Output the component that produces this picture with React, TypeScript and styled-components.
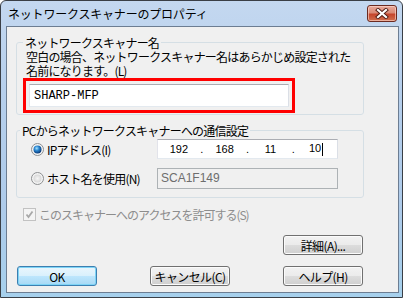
import styled, { createGlobalStyle, css } from "styled-components";

const GlobalStyle = createGlobalStyle`
  html, body {
    margin: 0;
    padding: 0;
    background: #ffffff;
  }
  body {
    font-family: "Noto Sans CJK JP", "Noto Sans", sans-serif;
    font-size: 12px;
    color: #000;
  }
  * {
    box-sizing: border-box;
  }
`;

const Window = styled.div`
  width: 403px;
  height: 298px;
  border: 1px solid #3a3f46;
  border-radius: 6px 6px 0 0;
  background: linear-gradient(#c4d8f0, #b6cfec 30%, #aecbea 70%, #a6d0ec);
  padding: 0 3px 4px 5px;
  display: flex;
  flex-direction: column;
  overflow: hidden;
`;

const TitleBar = styled.div`
  height: 25px;
  display: flex;
  align-items: center;
  justify-content: space-between;
  padding: 0 2px;
`;

const Title = styled.span`
  font-size: 12px;
  line-height: 14px;
  letter-spacing: -0.2px;
  color: #000;
`;

const CloseButton = styled.div`
  width: 30px;
  height: 17px;
  border: 1px solid #6b2a20;
  border-radius: 3px;
  background: linear-gradient(#e9a99a 0%, #d98a76 45%, #c5452c 55%, #d0704f 100%);
  box-shadow: inset 0 0 0 1px rgba(255, 220, 210, 0.6);
  display: flex;
  align-items: center;
  justify-content: center;
`;

const Client = styled.div`
  flex: 1;
  border: 1px solid #6c7d92;
  background: #f0f0f0;
  padding: 8px 0 0 9px;
`;

const Column = styled.div`
  width: 348px;
  display: flex;
  flex-direction: column;
`;

const Group = styled.fieldset<{ $top?: number; $pad: string }>`
  margin: ${(p) => p.$top ?? 0}px 0 0;
  padding: ${(p) => p.$pad};
  border: 1px solid #d5dfe5;
  border-radius: 3px;
  min-width: 0;
`;

const Legend = styled.legend<{ $indent: number }>`
  margin-left: ${(p) => p.$indent}px;
  padding: 0 2px;
  height: 15px;
  line-height: 15px;
  letter-spacing: -0.8px;
  white-space: nowrap;
`;

const Note = styled.p`
  margin: 0;
  line-height: 14px;
  letter-spacing: -0.8px;
  white-space: nowrap;
`;

const Highlight = styled.div`
  width: 272px;
  margin: 0 0 0 -3px;
  padding: 3px;
  border: 3px solid #ff0000;
`;

const NameInput = styled.div`
  height: 23px;
  background: #ffffff;
  border: 1px solid;
  border-color: #abadb3 #dbdfe6 #e3e9ef #e2e3ea;
  padding-left: 4px;
  display: flex;
  align-items: center;
  font-family: "Liberation Mono", monospace;
  font-size: 12px;
`;

const OptionRow = styled.div<{ $top?: number }>`
  height: 20px;
  margin-top: ${(p) => p.$top ?? 0}px;
  display: flex;
  align-items: center;
`;

const OptionLabel = styled.label`
  width: 126px;
  display: flex;
  align-items: center;
  gap: 3px;
  letter-spacing: -0.8px;
  white-space: nowrap;
`;

const Field = styled.div<{ $disabled?: boolean }>`
  width: 181px;
  height: ${(p) => (p.$disabled ? 21 : 20)}px;
  border: 1px solid;
  display: flex;
  align-items: center;
  ${(p) =>
    p.$disabled
      ? css`
          background: #f0f0f0;
          border-color: #adb2b5;
          color: #6d6d6d;
          padding-left: 3px;
          font-family: "Liberation Sans", sans-serif;
          font-size: 12px;
        `
      : css`
          background: #ffffff;
          border-color: #abadb3 #dbdfe6 #e3e9ef #e2e3ea;
          font-family: "Liberation Sans", sans-serif;
          font-size: 11px;
        `}
`;

const Octet = styled.span`
  flex: 1;
  text-align: center;
`;

const Dot = styled.span`
  width: 4px;
  text-align: center;
`;

const Caret = styled.span`
  display: inline-block;
  width: 1px;
  height: 13px;
  margin-left: 1px;
  background: #000;
  vertical-align: middle;
`;

const CheckRow = styled.label`
  margin: 10px 0 0 7px;
  height: 13px;
  display: flex;
  align-items: center;
  gap: 3px;
  color: #8d8d8d;
  letter-spacing: -1px;
  white-space: nowrap;
`;

const ButtonRow = styled.div<{ $top: number; $spread?: boolean }>`
  margin-top: ${(p) => p.$top}px;
  padding: 0 1px;
  display: flex;
  justify-content: ${(p) => (p.$spread ? "space-between" : "flex-end")};
`;

const Button = styled.button<{ $default?: boolean }>`
  width: 80px;
  height: 20px;
  padding: 0;
  font-family: inherit;
  font-size: 12px;
  letter-spacing: -0.6px;
  color: #000;
  border: 1px solid #707070;
  border-radius: 3px;
  background: linear-gradient(#f2f2f2 0%, #ebebeb 50%, #dddddd 50%, #cfcfcf 100%);
  box-shadow: inset 0 0 0 1px #fbfbfb;
  ${(p) =>
    p.$default &&
    css`
      border-color: #3c7fb1;
      background: linear-gradient(#eaf6fd 0%, #d9f0fc 50%, #bee6fd 50%, #a7d9f5 100%);
      box-shadow: inset 0 0 0 1px #7ed4f6;
    `}
`;

const CloseIcon = () => (
  <svg width="14" height="11" viewBox="0 0 14 11">
    <path d="M3 2 L11 9 M11 2 L3 9" stroke="#4e1c14" strokeWidth="4" strokeLinecap="square" />
    <path d="M3 2 L11 9 M11 2 L3 9" stroke="#ffffff" strokeWidth="2.2" strokeLinecap="square" />
  </svg>
);

const RadioIcon = ({ checked }: { checked?: boolean }) => (
  <svg width="13" height="13" viewBox="0 0 13 13">
    <defs>
      <radialGradient id="rOff" cx="50%" cy="50%" r="60%">
        <stop offset="0%" stopColor="#f6f6f6" />
        <stop offset="100%" stopColor="#d2d2d2" />
      </radialGradient>
      <radialGradient id="rOn" cx="40%" cy="35%" r="65%">
        <stop offset="0%" stopColor="#a7e3ff" />
        <stop offset="45%" stopColor="#2a86d0" />
        <stop offset="100%" stopColor="#0b3a78" />
      </radialGradient>
    </defs>
    <circle cx="6.5" cy="6.5" r="6" fill="#f4f4f4" stroke="#8c8e90" />
    <circle cx="6.5" cy="6.5" r="4" fill={checked ? "url(#rOn)" : "url(#rOff)"} />
  </svg>
);

const CheckIcon = () => (
  <svg width="13" height="13" viewBox="0 0 13 13">
    <rect x="0.5" y="0.5" width="12" height="12" fill="#f4f4f4" stroke="#c2c2c2" />
    <path d="M3.5 6.5 L5.5 9 L9.5 3.5" fill="none" stroke="#a8a8a8" strokeWidth="1.8" />
  </svg>
);

export default function App() {
  return (
    <>
      <GlobalStyle />
      <Window>
        <TitleBar>
          <Title>ネットワークスキャナーのプロパティ</Title>
          <CloseButton>
            <CloseIcon />
          </CloseButton>
        </TitleBar>
        <Client>
          <Column>
            <Group $pad="0 9px 1px 9px">
              <Legend $indent={-3}>ネットワークスキャナー名</Legend>
              <Note>
                空白の場合、ネットワークスキャナー名はあらかじめ設定された
                <br />
                名前になります。(L)
              </Note>
              <Highlight>
                <NameInput>SHARP-MFP</NameInput>
              </Highlight>
            </Group>

            <Group $top={8} $pad="1px 9px 9px 14px">
              <Legend $indent={-11}>PCからネットワークスキャナーへの通信設定</Legend>
              <OptionRow>
                <OptionLabel>
                  <RadioIcon checked />
                  IPアドレス(I)
                </OptionLabel>
                <Field>
                  <Octet>192</Octet>
                  <Dot>.</Dot>
                  <Octet>168</Octet>
                  <Dot>.</Dot>
                  <Octet>11</Octet>
                  <Dot>.</Dot>
                  <Octet>
                    10
                    <Caret />
                  </Octet>
                </Field>
              </OptionRow>
              <OptionRow $top={9}>
                <OptionLabel>
                  <RadioIcon />
                  ホスト名を使用(N)
                </OptionLabel>
                <Field $disabled>SCA1F149</Field>
              </OptionRow>
            </Group>

            <CheckRow>
              <CheckIcon />
              このスキャナーへのアクセスを許可する(S)
            </CheckRow>

            <ButtonRow $top={14}>
              <Button>詳細(A)...</Button>
            </ButtonRow>
            <ButtonRow $top={11} $spread>
              <Button $default>OK</Button>
              <Button>キャンセル(C)</Button>
              <Button>ヘルプ(H)</Button>
            </ButtonRow>
          </Column>
        </Client>
      </Window>
    </>
  );
}
